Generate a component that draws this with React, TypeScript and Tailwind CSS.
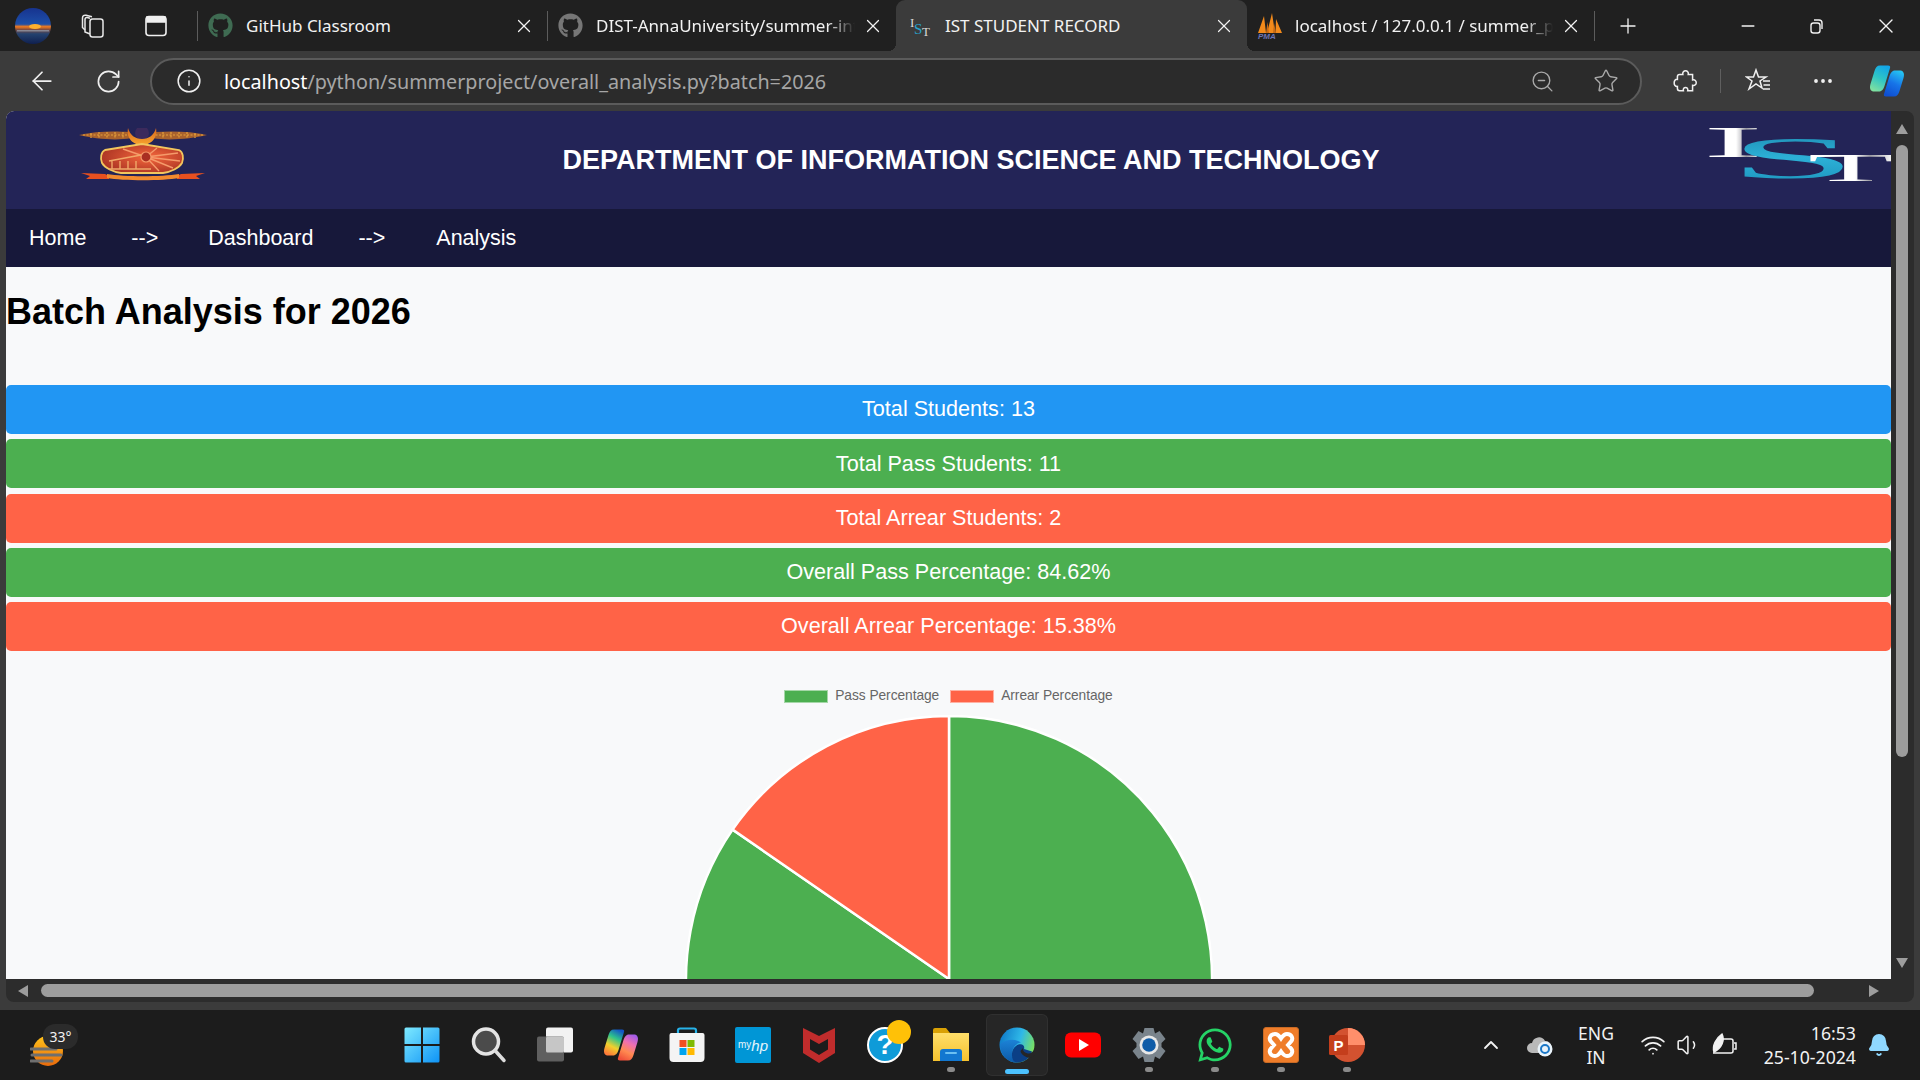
import React from "react";
import {
  ArrowLeft,
  Bell,
  ChevronUp,
  Info,
  Minus,
  MoreHorizontal,
  Plus,
  RotateCw,
  Star,
  Volume1,
  Wifi,
  X,
  ZoomOut,
} from "lucide-react";
import { FaGithub, FaWhatsapp } from "react-icons/fa";

const Ring = () => (
  <svg width="36" height="36" viewBox="0 0 36 36">
    <defs>
      <linearGradient id="avatar" x1="0" y1="0" x2="0" y2="1">
        <stop offset="0" stopColor="#17338f" />
        <stop offset="0.45" stopColor="#1d4fa8" />
        <stop offset="0.52" stopColor="#f47a1c" />
        <stop offset="0.6" stopColor="#7f4b3e" />
        <stop offset="0.72" stopColor="#24426f" />
        <stop offset="1" stopColor="#0f1f4f" />
      </linearGradient>
    </defs>
    <ellipse cx="18" cy="18" rx="18" ry="18" fill="url(#avatar)" />
    <ellipse cx="20" cy="18.5" rx="6" ry="2.4" fill="#ffb02e" />
    <rect x="2" y="22" width="32" height="1.5" fill="#9bb0c4" opacity="0.6" />
  </svg>
);

const CollectionsIcon = () => (
  <svg width="26" height="26" viewBox="0 0 26 26" fill="none" stroke="#e8e8e8" strokeWidth="1.5">
    <rect x="10" y="6" width="13" height="18" rx="2.5" />
    <path d="M10 21 5 19V6.5C5 5 6 4.4 7.2 4.6L10 5.2" />
    <path d="M5 17 2.5 14.5V5C2.5 3 4 1.8 6 2.3L12 3.8" />
  </svg>
);

const VerticalTabsIcon = () => (
  <svg width="24" height="24" viewBox="0 0 24 24" fill="none" stroke="#f0f0f0" strokeWidth="1.6">
    <rect x="2" y="2.5" width="20" height="19" rx="3" />
    <path d="M3 3h18v5H3z" fill="#f0f0f0" />
  </svg>
);

const RestoreIcon = () => (
  <svg width="16" height="18" viewBox="0 0 16 18" fill="none" stroke="#f0f0f0" strokeWidth="1.4">
    <rect x="2" y="6" width="9" height="10" rx="2.500" />
    <path d="M5 3h5a3 3 0 0 1 3 3v6" />
  </svg>
);

const IstFavicon = () => (
  <svg width="24" height="24" viewBox="0 0 24 24">
    <text x="2" y="13" fontFamily="Liberation Serif, serif" fontSize="13" fill="#d8d8d8">I</text>
    <text x="6" y="20" fontFamily="Liberation Serif, serif" fontSize="15" fill="#27a3cf">S</text>
    <text x="14" y="22" fontFamily="Liberation Serif, serif" fontSize="13" fill="#d8d8d8">T</text>
  </svg>
);

const PmaFavicon = () => (
  <svg width="26" height="26" viewBox="0 0 26 26">
    <path d="M1 20 7 3l2 17zM10 20 15 0l3 20zM18.500 20 19 6l6 14z" fill="#f28a1b" />
    <path d="M9 20 10.500 9 12 20zM16 20l1-10 2 10z" fill="#c96a12" />
    <text x="1" y="26" fontFamily="Liberation Sans, sans-serif" fontSize="8" fontStyle="italic" fontWeight="700" fill="#6d75b5">PMA</text>
  </svg>
);

function Tab({
  icon,
  title,
  active,
  className = "",
  fade,
}: {
  icon: React.ReactNode;
  title: string;
  active?: boolean;
  className?: string;
  fade?: boolean;
}) {
  return (
    <div
      className={`relative flex h-full items-center ${
        active
          ? "rounded-t-[9px] bg-[#3b3b3b] before:absolute before:bottom-0 before:left-[-8px] before:h-2 before:w-2 before:bg-[radial-gradient(circle_at_0_0,#202020_8px,#3b3b3b_8px)] after:absolute after:bottom-0 after:right-[-8px] after:h-2 after:w-2 after:bg-[radial-gradient(circle_at_100%_0,#202020_8px,#3b3b3b_8px)]"
          : ""
      } ${className}`}
    >
      <div className="flex w-[48px] shrink-0 justify-center pr-[3px]">{icon}</div>
      <div
        className={`min-w-0 flex-1 overflow-hidden whitespace-nowrap text-[17px] text-[#f2f2f2] ${
          fade ? "[mask-image:linear-gradient(to_left,transparent,black_28px)]" : ""
        }`}
      >
        {title}
      </div>
      <div className="mr-[11px] ml-[6px] flex w-[24px] shrink-0 justify-center">
        <X size={22} strokeWidth={1.3} color="#f2f2f2" />
      </div>
    </div>
  );
}

function TabStrip() {
  return (
    <div className="flex h-[51px] items-center bg-[#202020]">
      <div className="flex w-[197px] shrink-0 items-center">
        <div className="ml-[15px] flex w-[36px]"><Ring /></div>
        <div className="ml-[29px] flex w-[26px]"><CollectionsIcon /></div>
        <div className="ml-[38px] flex w-[24px]"><VerticalTabsIcon /></div>
      </div>
      <div className="h-[30px] w-px bg-[#5c5c5c]" />
      <Tab
        className="w-[349px]"
        icon={<FaGithub size={25} color="#3f6b52" />}
        title="GitHub Classroom"
      />
      <div className="h-[30px] w-px bg-[#5c5c5c]" />
      <Tab
        className="w-[348px]"
        icon={<FaGithub size={25} color="#767676" />}
        title="DIST-AnnaUniversity/summer-internship"
        fade
      />
      <Tab className="w-[351px] pl-[1px]" icon={<IstFavicon />} title="IST STUDENT RECORD" active />
      <Tab
        className="w-[347px]"
        icon={<PmaFavicon />}
        title="localhost / 127.0.0.1 / summer_project"
        fade
      />
      <div className="h-[30px] w-px bg-[#5c5c5c]" />
      <div className="ml-[21px] flex w-[24px] justify-center">
        <Plus size={30} strokeWidth={1.3} color="#f2f2f2" />
      </div>
      <div className="ml-[96px] flex w-[24px] justify-center">
        <Minus size={20} strokeWidth={1.8} color="#f2f2f2" />
      </div>
      <div className="ml-[45px] flex w-[24px] justify-center">
        <RestoreIcon />
      </div>
      <div className="ml-[45px] flex w-[24px] justify-center">
        <X size={26} strokeWidth={1.4} color="#f2f2f2" />
      </div>
    </div>
  );
}

const CopilotIcon = ({ id, top, bottom }: { id: string; top: string[]; bottom: string[] }) => (
  <svg width="36" height="36" viewBox="0 0 36 36">
    <defs>
      <linearGradient id={`${id}a`} x1="0.7" y1="0" x2="0.3" y2="1">
        {top.map((c, i) => (
          <stop key={c + i} offset={i / (top.length - 1)} stopColor={c} />
        ))}
      </linearGradient>
      <linearGradient id={`${id}b`} x1="0.7" y1="0" x2="0.3" y2="1">
        {bottom.map((c, i) => (
          <stop key={c + i} offset={i / (bottom.length - 1)} stopColor={c} />
        ))}
      </linearGradient>
    </defs>
    <path d="M11 2.500C8 2.500 6.500 4.500 5.500 8L1.500 21C0 26 2 28.500 5 28.500H10C13 28.500 14.500 26 15.500 23L21 5C21.500 3.500 21 2.500 19 2.500Z" fill={`url(#${id}a)`} />
    <path d="M25 33.500C28 33.500 29.500 31.500 30.500 28L34.500 15C36 10 34 7.500 31 7.500H26C23 7.500 21.500 10 20.500 13L15 31C14.500 32.500 15 33.500 17 33.500Z" fill={`url(#${id}b)`} />
  </svg>
);

function Toolbar() {
  return (
    <div className="flex h-[60px] items-center bg-[#3b3b3b]">
      <div className="ml-[27px] flex w-[30px] justify-center">
        <ArrowLeft size={32} strokeWidth={1.4} color="#f0f0f0" />
      </div>
      <div className="ml-[36px] flex w-[30px] justify-center">
        <RotateCw size={27} strokeWidth={1.5} color="#f0f0f0" />
      </div>
      <div className="ml-[27px] flex h-[47px] w-[1492px] items-center rounded-full border-2 border-[#5b5b5b] bg-[#2b2b2b]">
        <div className="ml-[23px] flex w-[28px] justify-center">
          <Info size={26} strokeWidth={1.4} color="#f0f0f0" />
        </div>
        <div className="ml-[21px] pt-[1px] text-[19.750px] whitespace-nowrap text-[#a6a6a6]">
          <span className="text-white">localhost</span>/python/summerproject/overall_analysis.py?batch=2026
        </div>
        <div className="ml-auto flex w-[26px] justify-center">
          <ZoomOut size={25} strokeWidth={1.3} color="#a9a9a9" />
        </div>
        <div className="mr-[20px] ml-[37px] flex w-[28px] justify-center">
          <Star size={26} strokeWidth={1.3} color="#a9a9a9" />
        </div>
      </div>
      <div className="ml-[30px] flex w-[26px] justify-center">
        <svg width="26" height="26" viewBox="0 0 24 24" fill="none" stroke="#f0f0f0" strokeWidth="1.4">
          <path d="M7 6H10C9 1.500 16 1.500 15 6H19V11C23.500 10 23.500 17 19 16V21H14.500C15.500 17 9.500 17 10.500 21H7Q5 21 5 19V17C1 17.500 1 10 5 10.500V8Q5 6 7 6Z" />
        </svg>
      </div>
      <div className="ml-[22px] h-[24px] w-px bg-[#5f5f5f]" />
      <div className="ml-[24px] flex w-[26px] justify-center">
        <svg width="26" height="26" viewBox="0 0 26 26" fill="none" stroke="#f0f0f0" strokeWidth="1.5">
          <path d="M11 2 13.500 9H21L15 13 17 20 11 16 4 21 7 13 1.500 9H8.500Z" />
          <path d="M18 13h7M18.500 17h6.500M18 21h7" />
        </svg>
      </div>
      <div className="ml-[39px] flex w-[26px] justify-center">
        <MoreHorizontal size={24} strokeWidth={1.8} color="#f0f0f0" />
      </div>
      <div className="ml-[33px] flex w-[36px] justify-center">
        <CopilotIcon id="edgeCopilot" top={["#12a5e8", "#2fc5c5", "#7fe0a0"]} bottom={["#25c2f2", "#1673e8", "#0f4fd0"]} />
      </div>
    </div>
  );
}

const Emblem = () => (
  <svg width="128" height="53" viewBox="0 0 128 53">
    <defs>
      <linearGradient id="wreath" x1="0" y1="0" x2="0" y2="1">
        <stop offset="0" stopColor="#d9661c" />
        <stop offset="1" stopColor="#f7a52e" />
      </linearGradient>
      <radialGradient id="shield" cx="0.58" cy="0.45" r="0.7">
        <stop offset="0" stopColor="#f4673c" />
        <stop offset="1" stopColor="#a02c20" />
      </radialGradient>
    </defs>
    <path d="M0 7C16 3 36 3 50 4L52 10C38 13 16 11 0 7Z" fill="#a9622c" />
    <path d="M128 7C112 3 92 3 76 4L74 10C88 13 112 11 128 7Z" fill="#a9622c" />
    <path d="M4 7H50M12 5V10M20 4V11M28 4V11M36 4V11M44 4V11M124 7H76M116 5V10M108 4V11M100 4V11M92 4V11M84 4V11" stroke="#e5a13c" strokeWidth="1.2" strokeDasharray="2 1.500" />
    <circle cx="63" cy="5" r="7" fill="#3c2a5c" />
    <path d="M49 0C47 11 55 17 63 17C71 17 79 11 77 0C75 7 70 11 63 11C56 11 51 7 49 0Z" fill="url(#wreath)" />
    <path d="M26 22 63 16 100 22C104 24 105 30 103 35C100 40 92 44 84 45H42C34 44 26 40 23 35C21 30 22 24 26 22Z" fill="url(#shield)" stroke="#f2c65e" strokeWidth="1.8" />
    <path d="M67 29 99 25M67 29 101 33M67 29 94 40M67 29 80 43M67 29 78 20M67 29 44 21" stroke="#f59a6a" strokeWidth="1.4" />
    <circle cx="67" cy="29" r="5" fill="#a92f22" stroke="#f59a6a" strokeWidth="1.2" />
    <path d="M33 41V33M41 41V33M49 41V33M57 41V33M30 33 62 27M30 41H72" stroke="#f0a868" strokeWidth="1.4" fill="none" />
    <path d="M2 45 26 46 30 48 30 51 7 51 11 48ZM126 45 102 46 98 48 98 51 121 51 117 48Z" fill="#e8501f" />
    <path d="M28 46C46 49 82 49 100 46V50C84 53 44 53 28 50Z" fill="#f28a2e" />
  </svg>
);

const IstLogo = () => (
  <svg width="184" height="54" viewBox="0 0 184 54">
    <defs>
      <linearGradient id="metal" x1="0" y1="0" x2="1" y2="0">
        <stop offset="0" stopColor="#ffffff" />
        <stop offset="0.55" stopColor="#ffffff" />
        <stop offset="0.72" stopColor="#9b9ba3" />
        <stop offset="1" stopColor="#ffffff" />
      </linearGradient>
      <linearGradient id="blueS" x1="0" y1="0" x2="0" y2="1">
        <stop offset="0" stopColor="#1b86ad" />
        <stop offset="0.5" stopColor="#2cb0d6" />
        <stop offset="1" stopColor="#1a8fb9" />
      </linearGradient>
    </defs>
    <text transform="translate(-4 29) scale(4.1 1)" fontFamily="Liberation Serif, serif" fontSize="44" fill="url(#metal)">I</text>
    <text transform="translate(22 50) scale(3.9 1)" fontFamily="Liberation Serif, serif" fontSize="59" fill="url(#blueS)">S</text>
    <text transform="translate(101 53) scale(3.6 1)" fontFamily="Liberation Serif, serif" fontSize="39" fill="url(#metal)">T</text>
  </svg>
);

const stats = [
  { label: "Total Students: 13", color: "bg-[#2196f3]" },
  { label: "Total Pass Students: 11", color: "bg-[#4caf50]" },
  { label: "Total Arrear Students: 2", color: "bg-[#ff6347]" },
  { label: "Overall Pass Percentage: 84.62%", color: "bg-[#4caf50]" },
  { label: "Overall Arrear Percentage: 15.38%", color: "bg-[#ff6347]" },
];

function PassChart() {
  return (
    <div className="mt-[38px] flex flex-col items-center">
      <div className="flex h-[14px] items-center text-[13.750px] leading-none tracking-[-0.05px] text-[#666666]">
        <span className="h-[13px] w-[44px] border border-[#a5d7a7] bg-[#4caf50]" />
        <span className="ml-[7px]">Pass Percentage</span>
        <span className="ml-[11px] h-[13px] w-[44px] border border-[#ffb1a3] bg-[#ff6347]" />
        <span className="ml-[7px]">Arrear Percentage</span>
      </div>
      <svg className="mt-[12px] block" width="528" height="264" viewBox="0 0 528 264">
        <path d="M264 264L264 1A263 263 0 1 1 47.600 114.600Z" fill="#4caf50" stroke="#ffffff" strokeWidth="2.500" />
        <path d="M264 264L47.600 114.600A263 263 0 0 1 264 1Z" fill="#ff6347" stroke="#ffffff" strokeWidth="2.500" />
      </svg>
    </div>
  );
}

function Page() {
  return (
    <div className="h-[868px] w-[1885px] shrink-0 overflow-hidden rounded-tl-[8px] bg-[#f8f9fa] font-['Liberation_Sans',Arial,sans-serif]">
      <header className="flex h-[98px] items-center justify-between bg-[#232457]">
        <div className="mt-[17px] ml-[73px] self-start"><Emblem /></div>
        <h2 className="ml-[28px] text-[27px] font-bold text-white">
          DEPARTMENT OF INFORMATION SCIENCE AND TECHNOLOGY
        </h2>
        <div className="mt-[17px] self-start"><IstLogo /></div>
      </header>
      <nav className="flex h-[58px] items-center bg-[#17183a] text-[21.500px] text-white">
        <a className="ml-[23px]">Home</a>
        <span className="ml-[45px]">--&gt;</span>
        <a className="ml-[50px]">Dashboard</a>
        <span className="ml-[45px]">--&gt;</span>
        <a className="ml-[51px]">Analysis</a>
      </nav>
      <h1 className="mt-[24px] text-[36px] leading-[42px] font-bold text-black">Batch Analysis for 2026</h1>
      <div className="mt-[52px] flex flex-col gap-[5.250px]">
        {stats.map((s) => (
          <div
            key={s.label}
            className={`flex h-[49px] items-center justify-center rounded-[5px] text-[21.600px] text-white ${s.color}`}
          >
            {s.label}
          </div>
        ))}
      </div>
      <PassChart />
    </div>
  );
}

const Tri = ({ dir }: { dir: "up" | "down" | "left" | "right" }) => {
  const d = {
    up: "M6 1 12 11H0Z",
    down: "M0 1H12L6 11Z",
    left: "M11 0V12L1 6Z",
    right: "M1 0V12L11 6Z",
  }[dir];
  return (
    <svg width="12" height="12" viewBox="0 0 12 12">
      <path d={d} fill="#9d9d9d" />
    </svg>
  );
};

function Viewport() {
  return (
    <div className="mx-[6px] h-[891px] overflow-hidden rounded-[8px] bg-[#2c2c2c]">
      <div className="flex h-[868px]">
        <Page />
        <div className="flex flex-1 flex-col items-center pr-[1px] pt-[12px]">
          <Tri dir="up" />
          <div className="mt-[10px] h-[612px] w-[12px] rounded-full bg-[#9d9d9d]" />
          <div className="mt-auto mb-[10px]"><Tri dir="down" /></div>
        </div>
      </div>
      <div className="flex h-[23px] items-start pt-[5px]">
        <div className="ml-[11px] pt-[1px]"><Tri dir="left" /></div>
        <div className="ml-[12px] h-[13px] w-[1773px] rounded-full bg-[#9d9d9d]" />
        <div className="ml-[54px] pt-[1px]"><Tri dir="right" /></div>
      </div>
    </div>
  );
}

const WindowsIcon = () => (
  <svg width="36" height="36" viewBox="0 0 36 36">
    <defs>
      <linearGradient id="win" x1="0" y1="0" x2="1" y2="1">
        <stop offset="0" stopColor="#7eeaff" />
        <stop offset="1" stopColor="#0e93f6" />
      </linearGradient>
    </defs>
    <path d="M0.500 2a1.500 1.500 0 0 1 1.500-1.500H17V17H0.500ZM19 0.500H34a1.500 1.500 0 0 1 1.500 1.500V17H19ZM0.500 19H17V35.500H2A1.500 1.500 0 0 1 0.500 34ZM19 19H35.500V34a1.500 1.500 0 0 1-1.500 1.500H19Z" fill="url(#win)" />
  </svg>
);

const SearchIcon = () => (
  <svg width="36" height="36" viewBox="0 0 36 36">
    <circle cx="15" cy="14.500" r="12.500" fill="#4b4b4b" stroke="#e4e4e4" strokeWidth="3.500" />
    <path d="M24.500 24 33 33.500" stroke="#dcdcdc" strokeWidth="3.500" strokeLinecap="round" />
  </svg>
);

const TaskViewIcon = () => (
  <svg width="36" height="36" viewBox="0 0 36 36">
    <rect x="9" y="0.500" width="27" height="25" rx="2" fill="#f2f2f2" />
    <rect x="0" y="9.500" width="27" height="25" rx="2" fill="#5f5f5f" />
    <rect x="9" y="9.500" width="18" height="16" rx="1.500" fill="#c6c6c6" />
  </svg>
);

const StoreIcon = () => (
  <svg width="36" height="36" viewBox="0 0 36 36">
    <path d="M9 8V3.500A2 2 0 0 1 11 1.500H25A2 2 0 0 1 27 3.500V8" fill="none" stroke="#27b3ea" strokeWidth="2.200" />
    <path d="M0.500 8A2 2 0 0 1 2.500 6H33.500A2 2 0 0 1 35.500 8V31A4 4 0 0 1 31.500 35H4.500A4 4 0 0 1 0.500 31Z" fill="#f4f4f4" />
    <rect x="10.500" y="13" width="7" height="7" fill="#f25022" />
    <rect x="18.500" y="13" width="7" height="7" fill="#7fba00" />
    <rect x="10.500" y="21" width="7" height="7" fill="#00a4ef" />
    <rect x="18.500" y="21" width="7" height="7" fill="#ffb900" />
  </svg>
);

const MyHpIcon = () => (
  <div className="flex h-[36px] w-[36px] items-center justify-center rounded-[2px] bg-[#0096d6] font-['Liberation_Sans',sans-serif] text-[10px] leading-none text-[#e4f5fc]">
    my<span className="text-[15px] italic">hp</span>
  </div>
);

const McAfeeIcon = () => (
  <svg width="34" height="36" viewBox="0 0 34 36">
    <path d="M1 1 17 9 33 1V26L17 36 1 26Z M8 12V22.500L17 28 26 22.500V12L17 17Z" fill="#c02c2c" fillRule="evenodd" />
  </svg>
);

const HelpIcon = () => (
  <div className="relative h-[36px] w-[36px]">
    <div className="flex h-[36px] w-[36px] items-center justify-center rounded-full border-2 border-white bg-[#0e9bd8] font-['Liberation_Sans',sans-serif] text-[28px] leading-none font-bold text-white">
      ?
    </div>
    <div className="absolute top-[-7px] left-[20px] h-[24px] w-[24px] rounded-full bg-[#ffc107]" />
  </div>
);

const FolderIcon = () => (
  <svg width="36" height="36" viewBox="0 0 36 36">
    <defs>
      <linearGradient id="folder" x1="0" y1="0" x2="0" y2="1">
        <stop offset="0" stopColor="#ffdf6a" />
        <stop offset="1" stopColor="#f6c22e" />
      </linearGradient>
    </defs>
    <path d="M0 3A2 2 0 0 1 2 1H13L17 6H35V10H0Z" fill="#d9a105" />
    <rect x="0" y="6" width="36" height="28" fill="url(#folder)" />
    <path d="M7 34V25A3 3 0 0 1 10 22H26A3 3 0 0 1 29 25V34Z" fill="#1277d0" />
    <rect x="12" y="25" width="12" height="2" rx="1" fill="#6bc0f2" />
  </svg>
);

const EdgeIcon = () => (
  <svg width="36" height="36" viewBox="0 0 36 36">
    <defs>
      <linearGradient id="edgeA" x1="0" y1="0.3" x2="1" y2="0.6">
        <stop offset="0" stopColor="#0f7ac9" />
        <stop offset="0.55" stopColor="#2fb8e8" />
        <stop offset="1" stopColor="#7ee25a" />
      </linearGradient>
      <linearGradient id="edgeB" x1="0" y1="0" x2="0" y2="1">
        <stop offset="0" stopColor="#1c82d6" />
        <stop offset="1" stopColor="#0c5aa8" />
      </linearGradient>
    </defs>
    <circle cx="18" cy="18" r="17.500" fill="url(#edgeA)" />
    <path d="M1 17C1 28 8 35.500 18 35.500 C14 32 12.500 28 13.500 23.500 C14.500 19 18 16 22 15.500 C17 12 8 11.500 1 17Z" fill="url(#edgeB)" />
    <path d="M14 33C11.500 27 13.500 19.500 19.500 17.500 C23.500 16.500 26 18.500 25 22 L33 24.500 C31 31.500 25 35.500 18 35.500 C16.500 35.500 15 34.500 14 33Z" fill="#0b3f86" />
    <path d="M24 21C23.500 24 26 26.500 30 26.500 C32 26.500 34 25 36 21.500 L36 28 L31 31 C28 31 22 28 21.500 24Z" fill="#262626" />
  </svg>
);

const YouTubeIcon = () => (
  <svg width="36" height="26" viewBox="0 0 36 26">
    <rect x="0" y="0.500" width="36" height="25" rx="6" fill="#ff0000" />
    <path d="M14 7 24 13 14 19Z" fill="#ffffff" />
  </svg>
);

const SettingsIcon = () => (
  <svg width="36" height="36" viewBox="0 0 36 36">
    <path d="M13.500 1H22.500L24 6.500 28.500 4 34.500 12 30.500 16V20L34.500 24 28.500 32 24 29.500 22.500 35H13.500L12 29.500 7.500 32 1.500 24 5.500 20V16L1.500 12 7.500 4 12 6.500Z" fill="#7a848c" strokeLinejoin="round" />
    <circle cx="18" cy="18" r="9.500" fill="#e8e8e8" />
    <circle cx="18" cy="18" r="6.800" fill="#0f5ca8" />
  </svg>
);

const XamppIcon = () => (
  <div className="flex h-[36px] w-[36px] items-center justify-center rounded-[3px] border border-[#c96a24] bg-[#ef7d2a]">
    <svg width="28" height="28" viewBox="0 0 28 28" fill="none" stroke="#ffffff" strokeWidth="4">
      <path d="M8 3C3 3 1.500 8 4 10.500L7 14 4 17.500C1.500 20 3 25 8 25 11 25 13 22 14 20.500 15 22 17 25 20 25 25 25 26.500 20 24 17.500L21 14 24 10.500C26.500 8 25 3 20 3 17 3 15 6 14 7.500 13 6 11 3 8 3Z" />
    </svg>
  </div>
);

const PowerPointIcon = () => (
  <svg width="36" height="36" viewBox="0 0 36 36">
    <circle cx="19" cy="18" r="17" fill="#d35230" />
    <path d="M19 1A17 17 0 0 1 36 18H19Z" fill="#ff8f6b" />
    <rect x="0" y="8" width="19" height="20" rx="1.500" fill="#c43e1c" />
    <text x="4.500" y="24" fontFamily="Liberation Sans, sans-serif" fontSize="15" fontWeight="700" fill="#ffffff">P</text>
  </svg>
);

function TaskItem({
  children,
  dot,
  active,
  className = "w-[66px]",
}: {
  children: React.ReactNode;
  dot?: boolean;
  active?: boolean;
  className?: string;
}) {
  return (
    <div className={`relative flex h-[60px] items-center justify-center rounded-[5px] ${active ? "mx-[3px] bg-[#262626] ring-1 ring-[#303030]" : ""} ${className}`}>
      {children}
      {dot && <span className="absolute bottom-[3px] left-1/2 h-[5px] w-[8px] -translate-x-1/2 rounded-full bg-[#8a8a8a]" />}
      {active && <span className="absolute bottom-[1px] left-1/2 h-[5px] w-[24px] -translate-x-1/2 rounded-full bg-[#4cc2ff]" />}
    </div>
  );
}

function Taskbar() {
  return (
    <div className="mt-[8px] flex h-[70px] items-center bg-[#1c1c1c] text-[#f2f2f2]">
      <div className="relative ml-[30px] h-[42px] w-[48px]">
        <svg className="absolute top-[12px] left-0" width="36" height="30" viewBox="0 0 36 30">
          <defs>
            <linearGradient id="sun" x1="0" y1="0" x2="0" y2="1">
              <stop offset="0" stopColor="#ffc21a" />
              <stop offset="1" stopColor="#e86a0c" />
            </linearGradient>
          </defs>
          <ellipse cx="18" cy="15" rx="15" ry="15" fill="url(#sun)" />
          <path d="M1 13H26M2 19H31M1 25H22" stroke="#6f6f6f" strokeWidth="3" strokeLinecap="round" />
        </svg>
        <div className="absolute top-0 left-[13px] flex h-[25px] w-[35px] items-center justify-center rounded-[12px] bg-[#2b2b2b] text-[14px]">
          33°
        </div>
      </div>
      <TaskItem className="ml-[310px] w-[68px]"><WindowsIcon /></TaskItem>
      <TaskItem><SearchIcon /></TaskItem>
      <TaskItem><TaskViewIcon /></TaskItem>
      <TaskItem>
        <CopilotIcon id="taskCopilot" top={["#1255c8", "#2fc48a", "#f2d02c", "#ff7a3a"]} bottom={["#a45ce8", "#f070b0", "#ff8a50", "#f0503a"]} />
      </TaskItem>
      <TaskItem><StoreIcon /></TaskItem>
      <TaskItem><MyHpIcon /></TaskItem>
      <TaskItem><McAfeeIcon /></TaskItem>
      <TaskItem><HelpIcon /></TaskItem>
      <TaskItem dot><FolderIcon /></TaskItem>
      <TaskItem active className="w-[60px]"><EdgeIcon /></TaskItem>
      <TaskItem><YouTubeIcon /></TaskItem>
      <TaskItem dot><SettingsIcon /></TaskItem>
      <TaskItem dot><FaWhatsapp size={38} color="#25d366" /></TaskItem>
      <TaskItem dot><XamppIcon /></TaskItem>
      <TaskItem dot><PowerPointIcon /></TaskItem>
      <div className="ml-[99px] flex w-[24px] justify-center">
        <ChevronUp size={26} strokeWidth={1.8} color="#f2f2f2" />
      </div>
      <div className="ml-[23px] flex w-[28px] justify-center">
        <svg width="28" height="24" viewBox="0 0 28 24">
          <path d="M6 20A5 5 0 0 1 6 10 7 7 0 0 1 19 8 5.500 5.500 0 0 1 20 20Z" fill="#b9b9b9" />
          <circle cx="19" cy="16" r="7.500" fill="#eaf4fb" />
          <circle cx="19" cy="16" r="4" fill="none" stroke="#1b78c8" strokeWidth="2" />
        </svg>
      </div>
      <div className="ml-[23px] flex w-[38px] flex-col items-center text-[17.500px] leading-[24px]">
        <span>ENG</span>
        <span>IN</span>
      </div>
      <div className="ml-[24px] flex w-[28px] justify-center">
        <Wifi size={26} strokeWidth={1.6} color="#f2f2f2" />
      </div>
      <div className="ml-[9px] flex w-[26px] justify-center">
        <Volume1 size={26} strokeWidth={1.4} color="#f2f2f2" />
      </div>
      <div className="ml-[8px] flex w-[28px] justify-center">
        <svg width="28" height="26" viewBox="0 0 28 26" fill="none" stroke="#f2f2f2" strokeWidth="1.5">
          <path d="M8 7H21A2 2 0 0 1 23 9V19A2 2 0 0 1 21 21H3" />
          <path d="M24 11H26V17H24" />
          <path d="M4 20C2 14 6 6 12 2 15 8 12 16 4 20Z" fill="#f2f2f2" />
        </svg>
      </div>
      <div className="ml-[18px] flex w-[100px] flex-col items-end text-[17.700px] leading-[24px]">
        <span>16:53</span>
        <span>25-10-2024</span>
      </div>
      <div className="ml-[11px] flex w-[24px] justify-center">
        <Bell size={24} color="#8fd8ff" fill="#8fd8ff" />
      </div>
    </div>
  );
}

export default function App() {
  return (
    <div className="flex h-[1080px] w-[1920px] flex-col overflow-hidden bg-[#3b3b3b] font-['Noto_Sans',sans-serif]">
      <TabStrip />
      <Toolbar />
      <Viewport />
      <Taskbar />
    </div>
  );
}
